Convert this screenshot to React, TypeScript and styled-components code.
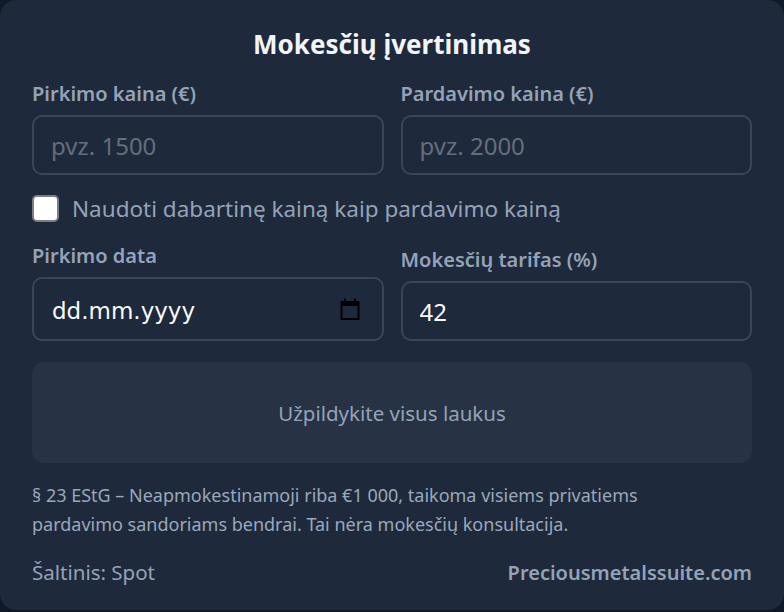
import React, { useState } from "react";
import styled, { createGlobalStyle } from "styled-components";

const GlobalStyle = createGlobalStyle`
  html, body {
    margin: 0;
    padding: 0;
    background: #111827;
  }
  body {
    font-family: "Noto Sans", "Open Sans", sans-serif;
  }
  * { box-sizing: border-box; }
`;

const Card = styled.div`
  width: 784px;
  height: 610px;
  background: #1e293b;
  border-radius: 16px;
  padding: 26px 32px 0 32px;
  display: flex;
  flex-direction: column;
`;

const Title = styled.h2`
  margin: 0;
  text-align: center;
  font-size: 26px;
  line-height: 36px;
  font-weight: 700;
  color: #f1f5f9;
`;

const Grid = styled.div<{ $top: number }>`
  display: grid;
  grid-template-columns: minmax(0, 1fr) minmax(0, 1fr);
  column-gap: 17px;
  align-items: end;
  margin-top: ${(p) => p.$top}px;
`;

const Field = styled.label`
  display: flex;
  flex-direction: column;
  gap: 8px;
`;

const Label = styled.span`
  font-size: 20px;
  line-height: 26px;
  font-weight: 600;
  color: #94a3b8;
`;

const Input = styled.input`
  height: 60px;
  width: 100%;
  background: #1e293b;
  border: 2px solid #3b4555;
  border-radius: 10px;
  padding: 0 17px;
  font-family: inherit;
  font-size: 24px;
  color: #f8fafc;
  outline: none;
  &::placeholder {
    color: #646e7c;
  }
`;

const DateBox = styled.div`
  height: 64px;
  border: 2px solid #3b4555;
  border-radius: 10px;
  display: flex;
  align-items: center;
  padding: 0 22px 0 18px;
`;

const DateText = styled.input`
  flex: 1;
  min-width: 0;
  border: none;
  background: transparent;
  outline: none;
  padding: 4px 0 0;
  font-family: "DejaVu Sans", sans-serif;
  font-size: 23px;
  color: #f8fafc;
`;

const CheckRow = styled.label`
  display: flex;
  align-items: center;
  gap: 13px;
  margin-top: 18px;
  font-size: 22.5px;
  line-height: 31px;
  color: #94a3b8;
`;

const Box = styled.input`
  appearance: none;
  margin: 0;
  width: 27px;
  height: 27px;
  background: #ffffff;
  border: 2px solid #7a7f88;
  border-radius: 5px;
`;

const Result = styled.div`
  margin-top: 21px;
  height: 101px;
  border-radius: 12px;
  background: #273244;
  display: flex;
  align-items: center;
  justify-content: center;
  font-size: 20.5px;
  color: #94a3b8;
`;

const Note = styled.p`
  margin: 18px 0 0;
  max-width: 690px;
  font-size: 18px;
  line-height: 29px;
  color: #9aa8bc;
`;

const Footer = styled.div`
  margin-top: 19px;
  display: flex;
  justify-content: space-between;
  align-items: baseline;
  font-size: 20.5px;
  color: #94a3b8;
`;

const Brand = styled.span`
  font-weight: 600;
  font-size: 20px;
`;

const CalendarIcon = () => (
  <svg width="20" height="24" viewBox="0 0 20 24">
    <rect x="1.5" y="5" width="17" height="17" fill="none" stroke="#000" strokeWidth="2" />
    <rect x="1.5" y="5" width="17" height="4" fill="#000" />
    <rect x="4" y="1.5" width="2" height="4" fill="#000" />
    <rect x="14" y="1.5" width="2" height="4" fill="#000" />
  </svg>
);

export default function App() {
  const [useSpot, setUseSpot] = useState(false);
  const [rate, setRate] = useState("42");

  return (
    <>
      <GlobalStyle />
      <Card>
        <Title>Mokesčių įvertinimas</Title>
        <Grid $top={19}>
          <Field>
            <Label>Pirkimo kaina (€)</Label>
            <Input placeholder="pvz. 1500" />
          </Field>
          <Field>
            <Label>Pardavimo kaina (€)</Label>
            <Input placeholder="pvz. 2000" />
          </Field>
        </Grid>
        <CheckRow>
          <Box
            type="checkbox"
            checked={useSpot}
            onChange={(e) => setUseSpot(e.target.checked)}
          />
          Naudoti dabartinę kainą kaip pardavimo kainą
        </CheckRow>
        <Grid $top={19}>
          <Field>
            <Label>Pirkimo data</Label>
            <DateBox>
              <DateText readOnly value="dd.mm.yyyy" />
              <CalendarIcon />
            </DateBox>
          </Field>
          <Field>
            <Label>Mokesčių tarifas (%)</Label>
            <Input value={rate} onChange={(e) => setRate(e.target.value)} />
          </Field>
        </Grid>
        <Result>Užpildykite visus laukus</Result>
        <Note>
          § 23 EStG – Neapmokestinamoji riba €1 000, taikoma visiems privatiems
          pardavimo sandoriams bendrai. Tai nėra mokesčių konsultacija.
        </Note>
        <Footer>
          <span>Šaltinis: Spot</span>
          <Brand>Preciousmetalssuite.com</Brand>
        </Footer>
      </Card>
    </>
  );
}
